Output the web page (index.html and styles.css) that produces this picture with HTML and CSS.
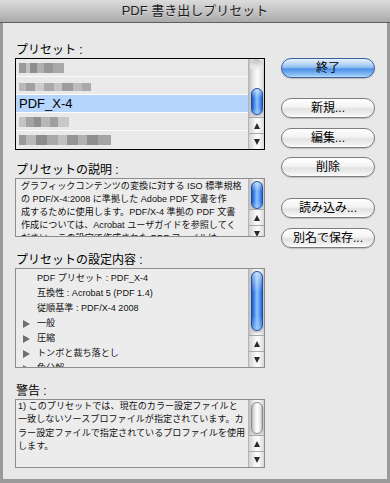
FILE: index.html
```html
<!DOCTYPE html>
<html lang="ja">
<head>
<meta charset="utf-8">
<title>PDF 書き出しプリセット</title>
<link rel="stylesheet" href="styles.css">
</head>
<body>
<div class="titlebar">PDF 書き出しプリセット</div>
<div class="frame">
  <div class="content">
    <div class="leftcol">
      <div class="label first">プリセット :</div>
      <div class="box listbox">
        <div class="rows">
          <div class="row"><span class="mosaic m1"></span></div>
          <div class="row"><span class="mosaic m2"></span></div>
          <div class="row sel">PDF_X-4</div>
          <div class="row"><span class="mosaic m3"></span></div>
          <div class="row last"><span class="mosaic m4"></span></div>
        </div>
        <div class="sb">
          <div class="track">
            <div class="cap"></div>
            <div class="thumb blue t-list"></div>
          </div>
          <div class="arrow up"><span class="tri-up"></span></div>
          <div class="arrow down"><span class="tri-down"></span></div>
        </div>
      </div>

      <div class="label l-desc">プリセットの説明 :</div>
      <div class="box descbox">
        <div class="text desc">グラフィックコンテンツの変換に対する ISO 標準規格<br>の PDF/X-4:2008 に準拠した Adobe PDF 文書を作<br>成するために使用します。PDF/X-4 準拠の PDF 文書<br>作成については、Acrobat ユーザガイドを参照してく<br>ださい。この設定で作成された PDF ファイルは、</div>
        <div class="sb">
          <div class="track">
            <div class="thumb blue t-desc"></div>
          </div>
          <div class="arrow up"><span class="tri-up"></span></div>
          <div class="arrow down"><span class="tri-down"></span></div>
        </div>
      </div>

      <div class="label l-set">プリセットの設定内容 :</div>
      <div class="box setbox">
        <div class="text settings">
          <div class="srow">PDF プリセット : PDF_X-4</div>
          <div class="srow">互換性 : Acrobat 5 (PDF 1.4)</div>
          <div class="srow">従順基準 : PDF/X-4 2008</div>
          <div class="srow"><span class="disc"></span>一般</div>
          <div class="srow"><span class="disc"></span>圧縮</div>
          <div class="srow"><span class="disc"></span>トンボと裁ち落とし</div>
          <div class="srow"><span class="disc"></span>色分解</div>
        </div>
        <div class="sb">
          <div class="track">
            <div class="thumb blue t-set"></div>
          </div>
          <div class="arrow up"><span class="tri-up"></span></div>
          <div class="arrow down"><span class="tri-down"></span></div>
        </div>
      </div>

      <div class="label l-warn">警告 :</div>
      <div class="box warnbox">
        <div class="text warn">1) このプリセットでは、現在のカラー設定ファイルと<br>一致しないソースプロファイルが指定されています。カ<br>ラー設定ファイルで指定されているプロファイルを使用<br>します。</div>
        <div class="sb">
          <div class="track">
            <div class="thumb clear t-warn"></div>
          </div>
          <div class="arrow up"><span class="tri-up"></span></div>
          <div class="arrow down"><span class="tri-down"></span></div>
        </div>
      </div>
    </div>

    <div class="rightcol">
      <div class="btn default">終了</div>
      <div class="btn b-new">新規...</div>
      <div class="btn b-edit">編集...</div>
      <div class="btn b-del">削除</div>
      <div class="btn b-load">読み込み...</div>
      <div class="btn b-save">別名で保存...</div>
    </div>
  </div>
</div>
</body>
</html>
```

FILE: styles.css
```css
html, body {
  margin: 0;
  padding: 0;
}
body {
  width: 390px;
  height: 483px;
  background: #9a9a9a;
  font-family: "Liberation Sans", "Noto Sans CJK JP", sans-serif;
  color: #000;
  overflow: hidden;
}
.titlebar {
  height: 22px;
  border-bottom: 1px solid #5e5e5e;
  background: linear-gradient(to bottom, #dcdcdc 0%, #c4c4c4 50%, #a9a9a9 100%);
  text-align: center;
  font-size: 13px;
  line-height: 22px;
  color: #1c1c1c;
  text-shadow: 0 1px 0 rgba(255,255,255,0.35);
}
.frame {
  padding: 0 3px 4px 3px;
}
.content {
  height: 456px;
  background: #e8e8e8;
  display: flex;
  padding-left: 12px;
  box-sizing: border-box;
}
.leftcol {
  width: 250px;
  display: flex;
  flex-direction: column;
}
.label {
  font-size: 12px;
  line-height: 14px;
  height: 14px;
  padding-left: 1px;
  margin-bottom: 1px;
  white-space: nowrap;
}
.label.first { margin-top: 20px; }
.label.l-desc { margin-top: 13px; }
.label.l-set { margin-top: 16px; }
.label.l-warn { margin-top: 16px; }

.box {
  display: flex;
  border: 1px solid #8c8c8c;
  background: #ececec;
  box-sizing: border-box;
  overflow: hidden;
}
.listbox { height: 92px; border-color: #000; background: #e9e9e9; }
.descbox { height: 59px; }
.setbox { height: 100px; }
.warnbox { height: 69px; }

.rows { flex: 1; display: flex; flex-direction: column; }
.row {
  height: 17px;
  border-bottom: 1px solid #fbfbfb;
  display: flex;
  align-items: center;
  padding-left: 3px;
  font-size: 13px;
}
.row.last { border-bottom: none; }
.row.sel { background: #b5d5fd; }
.mosaic {
  display: block;
  height: 10px;
}
.m1 { width: 45px; background: linear-gradient(to right, #9a9a9a 0 15%, #c2c2c2 15% 25%, #8e8e8e 25% 40%, #b0b0b0 40% 55%, #979797 55% 75%, #a8a8a8 75% 100%); }
.m2 { width: 72px; background: linear-gradient(to right, #b9b9b9 0 10%, #a0a0a0 10% 22%, #cdcdcd 22% 35%, #a9a9a9 35% 48%, #c4c4c4 48% 60%, #9d9d9d 60% 75%, #bcbcbc 75% 88%, #aaaaaa 88% 100%); height: 8px; margin-top: 2px; }
.m3 { width: 50px; background: linear-gradient(to right, #c3c3c3 0 14%, #a3a3a3 14% 30%, #8f8f8f 30% 45%, #b7b7b7 45% 62%, #9f9f9f 62% 78%, #c8c8c8 78% 100%); }
.m4 { width: 92px; background: linear-gradient(to right, #999 0 8%, #b9b9b9 8% 18%, #8c8c8c 18% 30%, #a8a8a8 30% 42%, #c0c0c0 42% 52%, #959595 52% 64%, #b2b2b2 64% 74%, #8f8f8f 74% 86%, #a5a5a5 86% 100%); }

.text {
  flex: 1;
  font-size: 9.1px;
  white-space: nowrap;
  color: #111;
  overflow: hidden;
}
.desc { padding: 1px 0 0 5px; line-height: 13px; }
.warn { padding: 0 0 0 2px; line-height: 13.3px; }
.settings { padding: 2px 0 0 21px; }
.srow {
  height: 15px;
  line-height: 15px;
  position: relative;
}
.disc {
  position: absolute;
  left: -14px;
  top: 4px;
  width: 0;
  height: 0;
  border-top: 4px solid transparent;
  border-bottom: 4px solid transparent;
  border-left: 7px solid #6e6e6e;
}

/* Aqua scrollbar */
.sb {
  width: 15px;
  display: flex;
  flex-direction: column;
  border-left: 1px solid #b4b4b4;
  flex: none;
}
.track {
  flex: 1;
  background: linear-gradient(to right, #c0c0c0 0%, #e4e4e4 25%, #fbfbfb 55%, #ececec 80%, #cdcdcd 100%);
  display: flex;
  flex-direction: column;
  align-items: center;
}
.cap {
  width: 13px;
  height: 12px;
  border-radius: 7px 7px 0 0;
  background: linear-gradient(to bottom, #bdbdbd, #e7e7e7 60%, rgba(240,240,240,0));
  flex: none;
}
.thumb {
  width: 12px;
  border-radius: 7px;
  box-sizing: border-box;
  flex: none;
}
.thumb.blue {
  border: 1px solid #1f4fa8;
  background:
    linear-gradient(to bottom, rgba(255,255,255,0.55), rgba(255,255,255,0) 35%, rgba(255,255,255,0) 75%, rgba(180,220,255,0.5)),
    linear-gradient(to right, #1d56c4 0%, #4c8fe9 25%, #8fc2fb 50%, #5c9cf0 75%, #2462cc 100%);
  box-shadow: 0 2px 2px rgba(0,0,0,0.2);
}
.thumb.clear {
  border: 1px solid #8a8a8a;
  background: linear-gradient(to right, #bdbdbd 0%, #efefef 35%, #ffffff 55%, #e2e2e2 85%, #b5b5b5 100%);
  box-shadow: 0 2px 2px rgba(0,0,0,0.15);
}
.t-list { margin-top: 17px; height: 27px; }
.t-desc { margin-top: 2px; height: 28px; }
.t-set { margin-top: 2px; height: 60px; }
.t-warn { margin-top: 2px; height: 32px; }

.arrow {
  height: 15px;
  border-top: 1px solid #a9a9a9;
  background: linear-gradient(to right, #d2d2d2 0%, #f4f4f4 40%, #fdfdfd 60%, #d9d9d9 100%);
  display: flex;
  align-items: center;
  justify-content: center;
  flex: none;
}
.tri-up {
  width: 0; height: 0;
  border-left: 3.5px solid transparent;
  border-right: 3.5px solid transparent;
  border-bottom: 6px solid #2a2a2a;
}
.tri-down {
  width: 0; height: 0;
  border-left: 3.5px solid transparent;
  border-right: 3.5px solid transparent;
  border-top: 6px solid #2a2a2a;
}

/* Buttons */
.rightcol {
  margin-left: 16px;
  width: 94px;
  display: flex;
  flex-direction: column;
  padding-top: 35px;
}
.btn {
  height: 20px;
  box-sizing: border-box;
  border: 1px solid #7d7d7d;
  border-radius: 10px;
  background: linear-gradient(to bottom, #ffffff 0%, #f3f3f3 45%, #e2e2e2 55%, #f0f0f0 85%, #ffffff 100%);
  box-shadow: 0 1px 1px rgba(0,0,0,0.18);
  text-align: center;
  font-size: 12px;
  line-height: 18px;
  color: #000;
  white-space: nowrap;
}
.btn.default {
  border-color: #3b5f9e;
  background:
    linear-gradient(to bottom, rgba(255,255,255,0.7) 0%, rgba(255,255,255,0.25) 45%, rgba(255,255,255,0) 55%),
    linear-gradient(to bottom, #a8cdf7 0%, #6aa6ec 50%, #4a8fe6 55%, #8ec3f8 90%, #c2e2ff 100%);
}
.b-new { margin-top: 20px; }
.b-edit { margin-top: 10px; }
.b-del { margin-top: 9px; }
.b-load { margin-top: 21px; }
.b-save { margin-top: 10px; }
```
